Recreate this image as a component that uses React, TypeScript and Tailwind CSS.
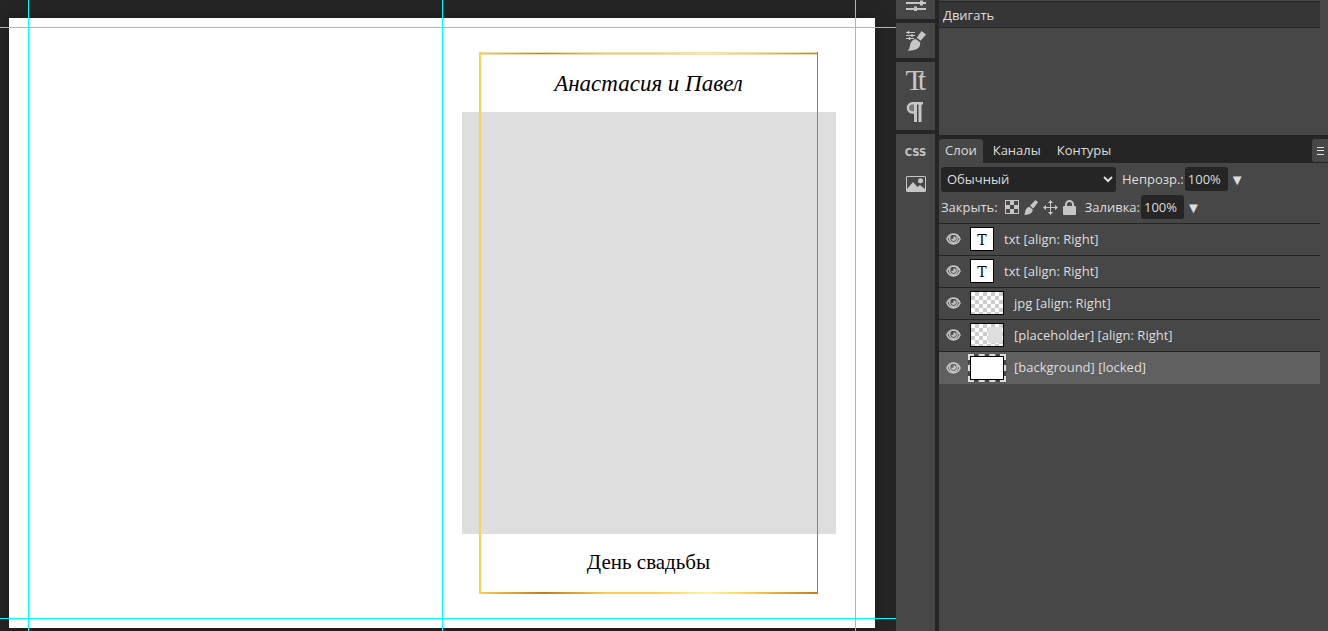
import React from "react";

type Layer = { name: string; kind: "text" | "image" | "placeholder" | "background"; selected?: boolean };

const layers: Layer[] = [
  { name: "txt [align: Right]", kind: "text" },
  { name: "txt [align: Right]", kind: "text" },
  { name: "jpg [align: Right]", kind: "image" },
  { name: "[placeholder] [align: Right]", kind: "placeholder" },
  { name: "[background] [locked]", kind: "background", selected: true },
];

function EyeIcon() {
  return (
    <svg width="16" height="12" viewBox="0 0 16 12" aria-hidden="true">
      <path
        d="M1 6C2.300 3 4.500 1.200 7.500 1.200S12.700 3 14 6C12.700 9 10.500 10.800 7.500 10.800S2.300 9 1 6z"
        fill="none"
        stroke="#c6c6c6"
        strokeWidth="1.700"
      />
      <path d="M4.500 3.500A3.700 3.700 0 1 0 10.500 3.500" fill="none" stroke="#c6c6c6" strokeWidth="1.300" />
      <path fill="#c6c6c6" d="M7.500 3.200A2.400 2.400 0 1 1 5.200 5.700H7.500z" />
    </svg>
  );
}

function SlidersIcon() {
  return (
    <svg width="20" height="20" viewBox="0 0 20 20" aria-hidden="true" fill="#c6c6c6">
      <path d="M0 4h20v2H0zM0 11h20v2H0zM0 17h20v2H0z" />
      <path d="M14 9.500h3v5h-3zM8 15.500h3v5H8z" />
    </svg>
  );
}

function BrushSettingsIcon() {
  return (
    <svg width="20" height="20" viewBox="0 0 20 20" aria-hidden="true">
      <path d="M0 1.500h9M0 4.500h9M0 7.500h8" stroke="#c6c6c6" strokeWidth="1" />
      <path d="M2.500 0v3M6 3v3M3.500 6v3" stroke="#c6c6c6" strokeWidth="1.500" />
      <path fill="#c6c6c6" d="M15.500 0L20 3.500L14.700 9.700L10.800 6.700z" />
      <path fill="#c6c6c6" d="M9.800 8L14 11.300C15 16 11.500 20 1.500 19.800C5.500 17.500 2 9.500 9.800 8z" />
    </svg>
  );
}

function ParagraphIcon() {
  return (
    <svg width="20" height="20" viewBox="0 0 20 20" aria-hidden="true">
      <path d="M17 1.200H6.500a4.500 4.500 0 0 0 0 9.300H9" fill="none" stroke="#c6c6c6" strokeWidth="2.400" />
      <path d="M5 2h3v8H6.500A4 4 0 0 1 5 2z" fill="#c6c6c6" fillOpacity=".4" />
      <path d="M8 1h3v19H8zM12.500 1h3v19h-3z" fill="#c6c6c6" />
    </svg>
  );
}

function PictureIcon() {
  return (
    <svg width="20" height="16" viewBox="0 0 20 16" aria-hidden="true">
      <rect x=".5" y=".5" width="19" height="15" rx=".5" fill="none" stroke="#c6c6c6" />
      <path fill="#c6c6c6" d="M1 13L7 6l4.500 5L14 9l5 4v2.500H1z" />
      <circle cx="14.500" cy="4.700" r="2.500" fill="#c6c6c6" />
    </svg>
  );
}

function CheckerIcon() {
  return (
    <svg width="14" height="14" viewBox="0 0 14 14" aria-hidden="true">
      <path fill="#c6c6c6" fillRule="evenodd" d="M0 0h14v14H0zM1 1v12h12V1z" />
      <path fill="#c6c6c6" d="M5 1h4v4H5zM1 5h4v4H1zM9 5h4v4H9zM5 9h4v4H5z" />
    </svg>
  );
}

function BrushIcon() {
  return (
    <svg width="14" height="15" viewBox="0 0 14 15" aria-hidden="true" fill="#c6c6c6">
      <path d="M11.500 0L14 2.200L9.300 8.500L6 5.800z" />
      <path d="M5.300 6.700L8.700 9.400C8.900 13 5 15 0 14.800C2 13 .3 8 5.300 6.700z" />
    </svg>
  );
}

function MoveIcon() {
  return (
    <svg width="15" height="15" viewBox="0 0 15 15" aria-hidden="true">
      <path d="M7.500 1v13M1 7.500h13" stroke="#c6c6c6" />
      <path fill="#c6c6c6" d="M7.500 0L10 3H5zM7.500 15L5 12h5zM0 7.500L3 5v5zM15 7.500L12 10V5z" />
    </svg>
  );
}

function LockIcon() {
  return (
    <svg width="13" height="15" viewBox="0 0 13 15" aria-hidden="true">
      <path d="M3 8V4.500a3.500 3.500 0 0 1 7 0V8" fill="none" stroke="#c6c6c6" strokeWidth="2" />
      <rect y="6" width="13" height="9" rx="1" fill="#c6c6c6" />
    </svg>
  );
}

const checker =
  "bg-white bg-[conic-gradient(#cbcbcb_25%,#fff_0_50%,#cbcbcb_0_75%,#fff_0)] bg-[length:8px_8px]";

function Thumbnail({ kind }: { kind: Layer["kind"] }) {
  if (kind === "text") {
    return (
      <span className="flex size-6 items-center justify-center border border-black bg-white pt-0.5 font-['DejaVu_Serif',serif] text-[14px] leading-none text-black">
        T
      </span>
    );
  }
  if (kind === "background") {
    return (
      <span className="-mx-0.5 flex border-2 border-dashed border-[#dddddd] bg-[#474747]">
        <span className="h-6 w-[34px] border border-black bg-white" />
      </span>
    );
  }
  return (
    <span className={`flex h-6 w-[34px] items-center justify-end border border-black ${checker}`}>
      {kind === "placeholder" && <span className="mr-px h-4 w-[14px] bg-[#dedede]" />}
    </span>
  );
}

function PercentField({ id, label }: { id: string; label: string }) {
  return (
    <div className="flex items-center">
      <label htmlFor={id}>{label}</label>
      <input
        id={id}
        defaultValue="100%"
        className="ml-px h-6 w-[43px] rounded-[3px] bg-[#252525] px-[3px] text-[13px] text-[#dddddd] outline-none"
      />
      <button type="button" aria-label={`${label} ▼`} className="ml-0.5 w-3 text-[15px] leading-none">
        ▼
      </button>
    </div>
  );
}

function Canvas() {
  return (
    <main className="relative flex min-w-0 flex-1 overflow-hidden bg-[#252525] pt-[18px] pr-[21px] pb-[3px] pl-[9px]">
      <div className="relative flex-1 bg-white shadow-[0_0_12px_#1a1a1a]">
        <div className="absolute top-[94px] right-[39px] bottom-[94px] w-[374px] bg-[#dedede]" />
        <div className="absolute top-[34px] right-[57px] bottom-[34px] flex w-[339px] flex-col items-center justify-between py-[18px] text-black">
          <div className="absolute inset-x-0 top-0 h-[3px] border-y border-[#f3dcae] bg-[linear-gradient(90deg,#ffcf4b,#c47a16_19%,#ffcf4b_38%,#ffcf4b_52%,#fff3a8_67%,#ffcf4b_80%,#c47a16)]" />
          <div className="absolute inset-x-0 bottom-0 h-0.5 bg-[linear-gradient(90deg,#ffcf4b,#c47a16_19%,#ffcf4b_38%,#ffcf4b_52%,#fff3a8_67%,#ffcf4b_80%,#c47a16)]" />
          <div className="absolute inset-y-0 left-0 w-0.5 bg-[#ffcf55]" />
          <div className="absolute inset-y-0 right-0 w-px bg-[#c07a1c]" />
          <p className="font-['Liberation_Serif',serif] text-[23px] leading-7 italic">Анастасия и Павел</p>
          <p className="font-['Liberation_Serif',serif] text-[21px] leading-7">День свадьбы</p>
        </div>
      </div>
      <div className="absolute inset-y-0 left-[28px] w-px bg-[#00ffff]" />
      <div className="absolute inset-y-0 left-[442px] w-px bg-[#00ffff]" />
      <div className="absolute inset-y-0 left-[855px] w-px bg-[#00ffff]" />
      <div className="absolute inset-x-0 top-[27px] h-px bg-[#00ffff]" />
      <div className="absolute inset-x-0 bottom-[12px] h-px bg-[#00ffff]" />
    </main>
  );
}

function ToolStrip() {
  return (
    <nav className="flex w-[39px] shrink-0 flex-col gap-1 text-[#c6c6c6]">
      <div className="flex h-[19px] items-end justify-center bg-[#474747] pb-2">
        <button type="button" aria-label="Настройки"><SlidersIcon /></button>
      </div>
      <div className="flex h-[35px] items-center justify-center bg-[#474747]">
        <button type="button" aria-label="Кисть"><BrushSettingsIcon /></button>
      </div>
      <div className="flex h-[68px] flex-col items-center bg-[#474747] pt-1">
        <button
          type="button"
          className="flex h-9 w-5 items-start font-['Liberation_Serif',serif] text-[30px] leading-7"
        >
          T<span className="-ml-1.5">t</span>
        </button>
        <button type="button" aria-label="Абзац"><ParagraphIcon /></button>
      </div>
      <div className="flex flex-1 flex-col items-center gap-[17px] bg-[#474747] pt-[13px]">
        <button type="button" className="h-3 font-['DejaVu_Sans',sans-serif] text-[10px] leading-3 font-bold">
          CSS
        </button>
        <button type="button" aria-label="Изображение"><PictureIcon /></button>
      </div>
    </nav>
  );
}

function LayersPanel() {
  return (
    <section className="flex flex-1 flex-col bg-[#474747]">
      <div className="flex h-7 items-end bg-[#252525]" role="tablist">
        <button
          type="button"
          role="tab"
          aria-selected="true"
          className="h-6 rounded-t-[3px] bg-[#474747] px-1.5 pb-0.5"
        >
          Слои
        </button>
        <button type="button" role="tab" aria-selected="false" className="ml-1 h-6 px-1.5 pb-0.5">Каналы</button>
        <button type="button" role="tab" aria-selected="false" className="ml-1 h-6 px-1.5 pb-0.5">Контуры</button>
        <button
          type="button"
          aria-label="Меню"
          className="mb-px ml-auto flex h-[23px] w-4 items-center justify-end rounded-l-[3px] bg-[#474747] pr-1"
        >
          <svg width="7" height="8" viewBox="0 0 7 8" aria-hidden="true">
            <path d="M0 .5h7M0 3.500h7M0 7.500h7" stroke="#dddddd" />
          </svg>
        </button>
      </div>
      <div className="flex items-center gap-1.5 pt-1 pl-0.5">
        <select
          aria-label="Режим"
          className="h-[25px] w-[175px] rounded-[3px] bg-[#252525] px-0.5 pb-0.5 text-[13px] text-[#dddddd]"
        >
          <option>Обычный</option>
        </select>
        <div className="pb-px">
          <PercentField id="opacity" label="Непрозр.:" />
        </div>
      </div>
      <div className="flex items-center pt-[3px] pb-1 pl-0.5">
        <span>Закрыть:</span>
        <div className="mr-[9px] ml-[7px] flex items-center gap-[5px]">
          <button type="button" aria-label="Прозрачность"><CheckerIcon /></button>
          <button type="button" aria-label="Пиксели"><BrushIcon /></button>
          <button type="button" aria-label="Положение"><MoveIcon /></button>
          <button type="button" aria-label="Всё"><LockIcon /></button>
        </div>
        <PercentField id="fill" label="Заливка:" />
      </div>
      <ul className="mr-2">
        {layers.map((layer, i) => (
          <li
            key={i}
            className={`flex items-center border-t border-[#252525] pb-px pl-[7px] ${
              layer.selected ? "h-[33px] bg-[#606060]" : "h-8"
            }`}
          >
            <button type="button" aria-label="Видимость" className="mr-2"><EyeIcon /></button>
            <Thumbnail kind={layer.kind} />
            <span className="ml-2.5 pb-px">{layer.name}</span>
          </li>
        ))}
      </ul>
    </section>
  );
}

export default function App() {
  return (
    <div className="flex h-screen overflow-hidden bg-[#252525] font-['Open_Sans',sans-serif] text-[13px] leading-5 text-[#dddddd] [&_svg]:block">
      <Canvas />
      <ToolStrip />
      <aside className="ml-1 flex w-[389px] shrink-0 flex-col">
        <section className="h-[135px] bg-[#474747] pt-px">
          <div className="mr-2 flex h-[27px] items-center border-y border-[#252525] bg-[#363636] pl-1">Двигать</div>
        </section>
        <LayersPanel />
      </aside>
    </div>
  );
}
